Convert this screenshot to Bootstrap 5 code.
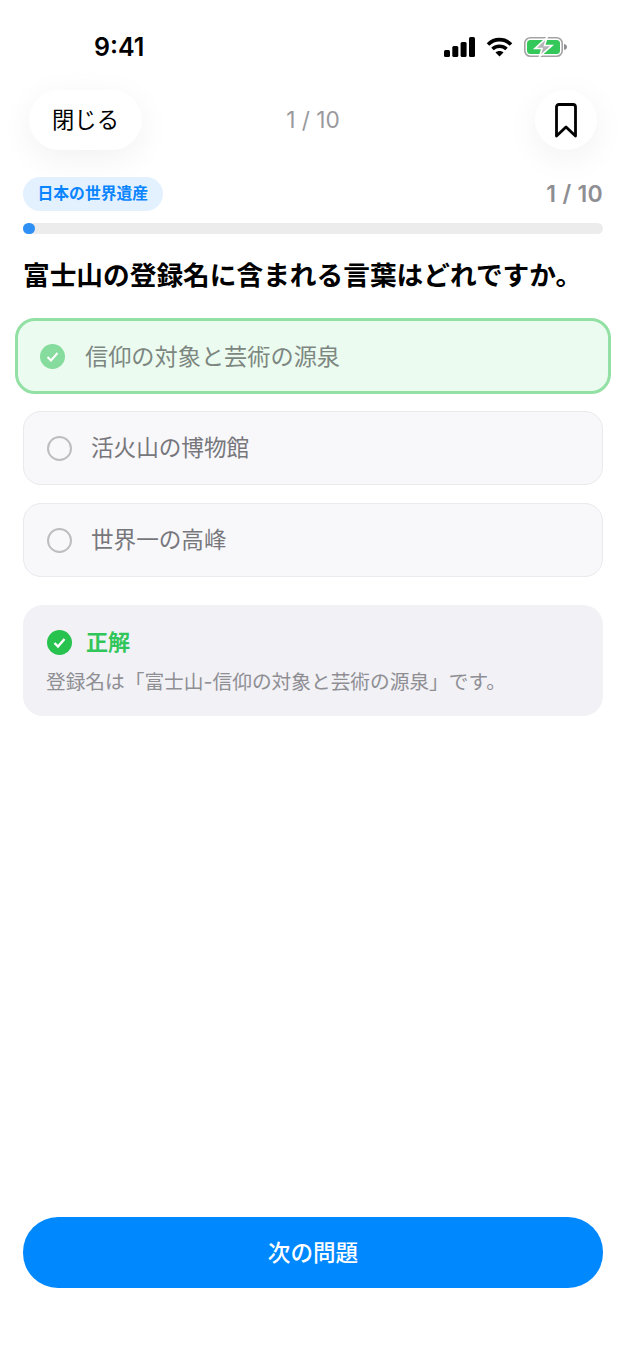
<!DOCTYPE html>
<html lang="ja">
<head>
    <meta charset="UTF-8">
    <meta name="viewport" content="width=device-width, initial-scale=1.0">
    <title>クイズ</title>
    <link rel="stylesheet" href="https://cdn.jsdelivr.net/npm/bootstrap@5.3.0/dist/css/bootstrap.min.css">
    <script src="https://cdn.jsdelivr.net/npm/bootstrap@5.3.0/dist/js/bootstrap.bundle.min.js"></script>

    <style>
        body {
            background-color: #fff;
            font-family: "Inter", "Noto Sans CJK JP", sans-serif;
            color: #000;
        }

        .quiz-page {
            height: 1360px;
            padding: 0 23px 72px;
            overflow: hidden;
        }

        /* status bar */
        .status-bar {
            height: 90px;
            padding: 30px 35px 0 71px;
        }

        .status-time {
            font-size: 25px;
            font-weight: 600;
            line-height: 34px;
        }

        .status-icons {
            height: 34px;
            gap: 11px;
        }

        /* top bar */
        .top-bar {
            height: 60px;
            padding: 0 6px;
        }

        .top-side {
            flex: 1 1 0;
        }

        .close-pill {
            width: 113px;
            height: 60px;
            border: 0;
            border-radius: 30px;
            background: #fff;
            color: #000;
            font-size: 22.300px;
            box-shadow: 0 8px 34px rgba(0, 0, 0, 0.06);
        }

        .save-circle {
            width: 62px;
            height: 60px;
            border: 0;
            border-radius: 50%;
            background: #fff;
            box-shadow: 0 8px 34px rgba(0, 0, 0, 0.06);
        }

        .top-count {
            font-size: 22.700px;
            color: #9a9a9e;
        }

        /* quiz header */
        .quiz-meta {
            margin-top: 27px;
            height: 34px;
        }

        .genre-chip {
            height: 34px;
            padding: 0 14.500px;
            border-radius: 17px;
            background: #e3f1ff;
            color: #0a84ff;
            font-size: 15.800px;
            font-weight: 700;
            line-height: 34px;
        }

        .meta-count {
            font-size: 23px;
            font-weight: 600;
            letter-spacing: 0.3px;
            color: #8e8e93;
        }

        .quiz-track {
            margin-top: 12px;
            height: 11px;
            border-radius: 6px;
            background: #ececec;
        }

        .quiz-fill {
            height: 11px;
            border-radius: 6px;
            background: #2e8ff5;
        }

        .quiz-title {
            margin: 22px 0 0;
            font-size: 26.700px;
            font-weight: 700;
            line-height: 38px;
            white-space: nowrap;
        }

        /* answers */
        .answer-list {
            margin-top: 24px;
            gap: 18px;
        }

        .answer-row {
            height: 74px;
            padding: 0 23px;
            gap: 19px;
            border: 1px solid #e9e9ee;
            border-radius: 18px;
            background: #f8f8fb;
            color: #77777b;
            font-size: 22.600px;
        }

        .answer-row.picked {
            margin: 0 -8px -1px;
            height: 76px;
            padding: 0 22px;
            gap: 20px;
            border: 3px solid #92e0a4;
            border-radius: 20px;
            background: #ecfbf0;
            color: #7d8781;
            font-size: 23.200px;
        }

        .picked-label {
            padding-top: 2px;
        }

        .answer-dot {
            width: 25px;
            height: 25px;
            flex: none;
            border: 2px solid #bdbdc1;
            border-radius: 50%;
        }

        /* explanation */
        .result-box {
            margin-top: 28px;
            height: 111px;
            padding: 23px 23px 0;
            border-radius: 20px;
            background: #f1f1f6;
        }

        .result-head {
            gap: 14px;
            color: #30c65a;
            font-size: 22px;
            font-weight: 700;
            line-height: 28px;
        }

        .result-icon {
            margin-left: 1px;
        }

        .result-text {
            margin-top: 11px;
            color: #8e8e93;
            font-size: 19.700px;
            line-height: 30px;
            white-space: nowrap;
        }

        .next-btn {
            height: 71px;
            border: 0;
            border-radius: 35px;
            background: #0088ff;
            color: #fff;
            font-size: 22.600px;
            font-weight: 500;
        }

        .next-btn:hover {
            background: #0088ff;
            color: #fff;
        }
    </style>
</head>
<body>
    <div class="quiz-page d-flex flex-column">
        <!-- Status bar -->
        <div class="status-bar d-flex justify-content-between align-items-start">
            <span class="status-time">9:41</span>
            <span class="status-icons d-flex align-items-center">
                <svg width="31" height="20" viewBox="0 0 31 20"><rect x="0" y="13" width="6" height="7" rx="1.500"/><rect x="8.300" y="9" width="6" height="11" rx="1.500"/><rect x="16.600" y="5" width="6" height="15" rx="1.500"/><rect x="25" y="0" width="6" height="20" rx="1.500"/></svg>
                <svg width="27" height="20" viewBox="0 0 26 20" fill="none" stroke="#000" stroke-width="3.600"><path d="M1.500 7.500C8 1 18 1 24.500 7.500"/><path d="M6 12C10 8.300 16 8.300 20 12"/><path d="M13 19.500 9 15.500C11 13.500 15 13.500 17 15.500Z" fill="#000" stroke="none"/></svg>
                <svg width="44" height="20" viewBox="0 0 44 20"><rect x="0.800" y="0.800" width="37.400" height="18.400" rx="5.500" fill="none" stroke="#a3a3a3" stroke-width="1.600"/><rect x="3" y="3" width="33" height="14" rx="3.500" fill="#34c759"/><path d="M40 7c2 .4 3 1.500 3 3s-1 2.600-3 3Z" fill="#8e8e93"/><path d="M23 .5 11 11.500H18L15.500 19.500 28 8.500H20.500Z" fill="#b4b4b8" stroke="#fff" stroke-width="1.600"/></svg>
            </span>
        </div>

        <!-- Top bar -->
        <div class="top-bar d-flex align-items-center">
            <div class="top-side d-flex">
                <button type="button" class="close-pill">閉じる</button>
            </div>
            <span class="top-count">1 / 10</span>
            <div class="top-side d-flex justify-content-end">
                <button type="button" class="save-circle d-flex align-items-center justify-content-center p-0">
                    <svg width="24" height="36" viewBox="0 0 24 36" fill="none" stroke="#000" stroke-width="2.800" stroke-linejoin="round"><path d="M5 2.500H19Q21.500 2.500 21.500 5V34L12 25 2.500 34V5Q2.500 2.500 5 2.500Z"/></svg>
                </button>
            </div>
        </div>

        <!-- Quiz header -->
        <div class="quiz-meta d-flex justify-content-between align-items-center">
            <span class="genre-chip">日本の世界遺産</span>
            <span class="meta-count">1 / 10</span>
        </div>
        <div class="quiz-track"><div class="quiz-fill" style="width: 2%"></div></div>
        <h1 class="quiz-title">富士山の登録名に含まれる言葉はどれですか。</h1>

        <!-- Answers -->
        <div class="answer-list d-flex flex-column">
            <div class="answer-row picked d-flex align-items-center">
                <svg width="25" height="25" viewBox="0 0 25 25" class="flex-shrink-0"><circle cx="12.500" cy="12.500" r="12.500" fill="#86dc9c"/><path d="M7.500 13l3.500 3.500 6.500-7.500" fill="none" stroke="#fff" stroke-width="2"/></svg>
                <span class="picked-label">信仰の対象と芸術の源泉</span>
            </div>
            <div class="answer-row d-flex align-items-center">
                <span class="answer-dot"></span>
                <span>活火山の博物館</span>
            </div>
            <div class="answer-row d-flex align-items-center">
                <span class="answer-dot"></span>
                <span>世界一の高峰</span>
            </div>
        </div>

        <!-- Explanation -->
        <div class="result-box">
            <div class="result-head d-flex align-items-center">
                <svg width="25" height="25" viewBox="0 0 25 25" class="result-icon flex-shrink-0"><circle cx="12.500" cy="12.500" r="12.500" fill="#28c24f"/><path d="M7.500 13l3.500 3.500 6.500-7.500" fill="none" stroke="#fff" stroke-width="2.400"/></svg>
                <span>正解</span>
            </div>
            <div class="result-text">登録名は「富士山-信仰の対象と芸術の源泉」です。</div>
        </div>

        <button type="button" class="next-btn w-100 mt-auto">次の問題</button>
    </div>
</body>
</html>
